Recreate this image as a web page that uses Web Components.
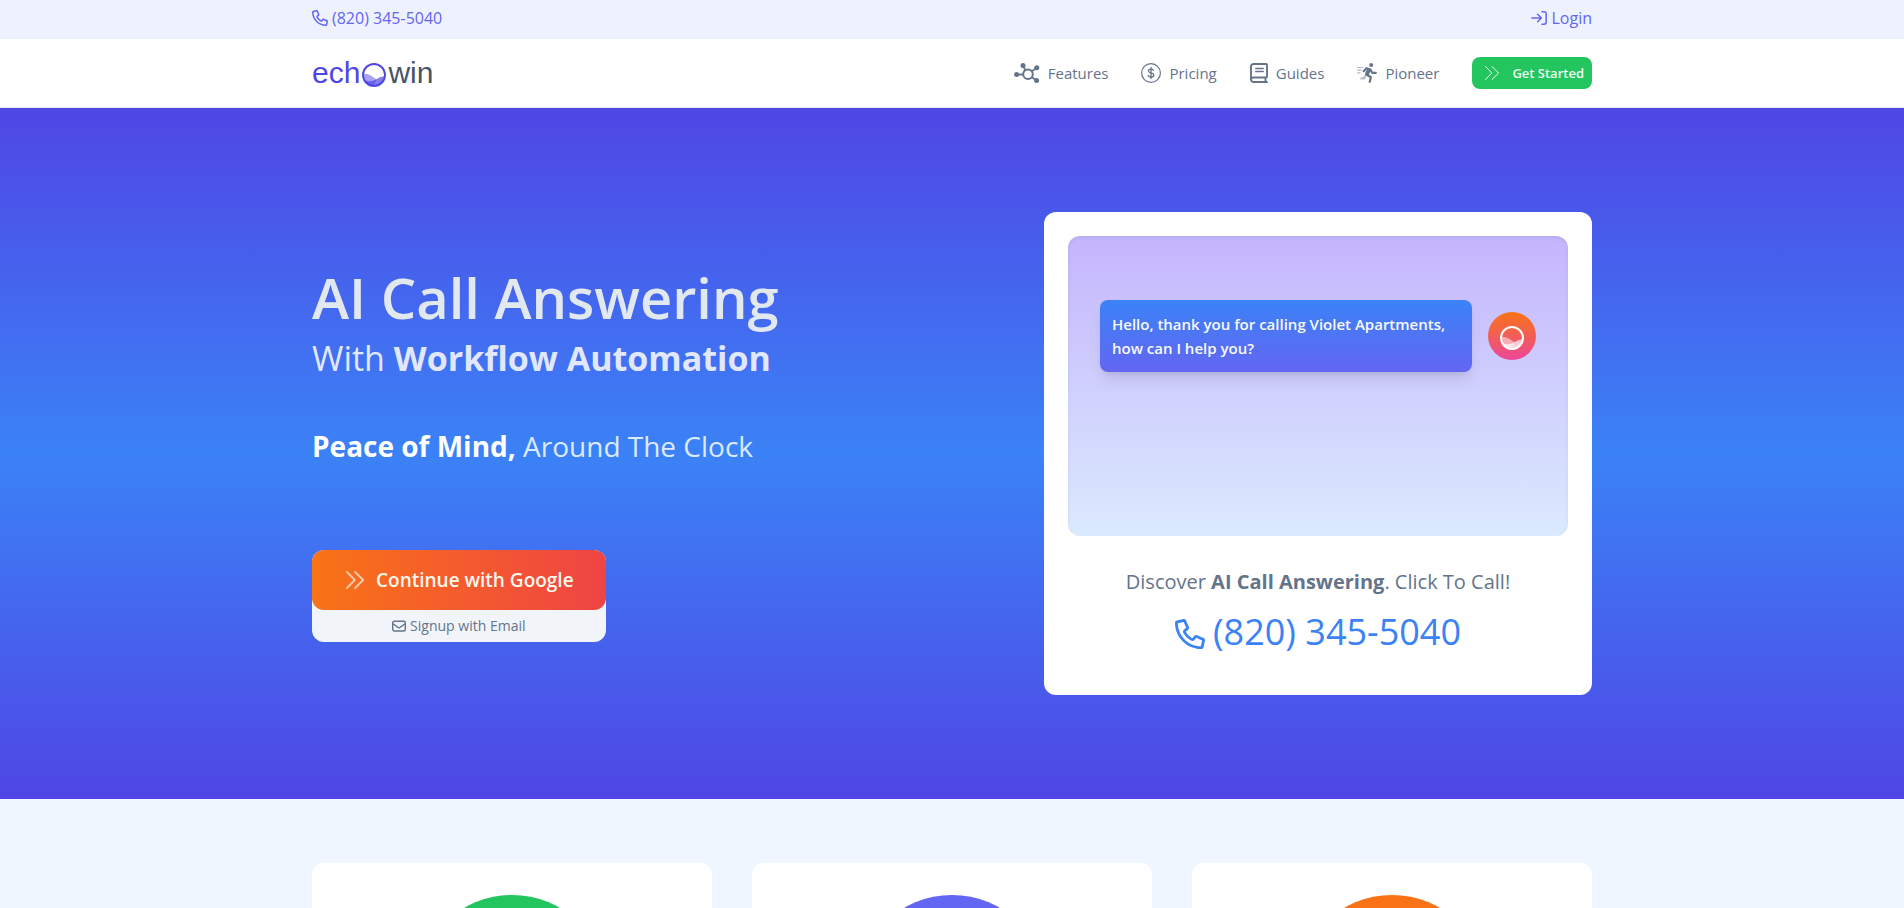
<!DOCTYPE html>
<html lang="en">
<head>
<meta charset="utf-8">
<title>echowin</title>
<style>
  body {
    margin: 0;
    background: #eff6ff;
    color: #64748b;
    font: 16px/24px "Open Sans", "Noto Sans", sans-serif;
  }
</style>
</head>
<body>
<top-bar></top-bar>
<nav-bar>
  <nav-link icon="hub">Features</nav-link>
  <nav-link icon="dollar">Pricing</nav-link>
  <nav-link icon="book">Guides</nav-link>
  <nav-link icon="runner">Pioneer</nav-link>
</nav-bar>
<hero-section>
  <call-card slot="card" phone="(820) 345-5040">Hello, thank you for calling Violet Apartments, how can I help you?</call-card>
</hero-section>
<feature-row>
  <feature-card color="#22c55e"></feature-card>
  <feature-card color="#6366f1"></feature-card>
  <feature-card color="#f97316"></feature-card>
</feature-row>

<script>
const icons = {
  phone: `<svg viewBox="0 0 512 512" fill="currentColor"><path d="M375.8 275.2c-16.4-7-35.4-2.4-46.7 11.4l-33.2 40.6c-46-26.7-84.4-65.1-111.1-111.1L225.3 183c13.8-11.3 18.5-30.3 11.4-46.7l-48-112C181.2 6.7 162.3-3.1 143.6.9l-112 24C13.2 28.8 0 45.1 0 64C0 300.7 183.5 494.5 416 510.9c4.5.3 9.1.6 13.7.8c6.2.2 12.2.3 18.4.3c18.9 0 35.2-13.2 39.1-31.6l24-112c4-18.7-5.8-37.6-23.4-45.1l-112-48zM441.5 464C225.8 460.5 51.5 286.2 48.1 70.5l99.2-21.3 43 100.4L154.4 179c-18.2 14.9-22.9 40.8-11.1 61.2c30.9 53.3 75.3 97.7 128.6 128.6c20.4 11.8 46.3 7.1 61.2-11.1l29.4-35.9 100.4 43L441.5 464z"/></svg>`,
  login: `<svg viewBox="0 0 16 16" fill="none" stroke="currentColor" stroke-width="1.5" stroke-linecap="round" stroke-linejoin="round"><path d="M.8 8h9.4M6.6 4.2 10.4 8l-3.8 3.8M11 1.8h2a2.2 2.2 0 0 1 2.2 2.2v8a2.2 2.2 0 0 1-2.2 2.2h-2"/></svg>`,
  hub: `<svg viewBox="0 0 26 20" fill="currentColor" stroke="currentColor"><path fill="none" stroke-width="1.8" d="M3 11.5h6M9.2 3l2.4 4.5M22.5 5 17.5 8.5M17.5 14l5 3.5"/><circle cx="14" cy="11.2" r="4.8" fill="none" stroke-width="2"/><g stroke="none"><circle cx="2.6" cy="11.6" r="2.5"/><circle cx="9" cy="2.6" r="2.5"/><circle cx="22.8" cy="4.8" r="2.5"/><circle cx="22.6" cy="17.4" r="2.5"/></g></svg>`,
  dollar: `<svg viewBox="0 0 20 20" fill="none" stroke="currentColor" stroke-linecap="round"><circle cx="10" cy="10" r="9.4" stroke-width="1.2"/><path stroke-width="1.3" d="M10 4.5v11M12.6 7.3C12 6.5 11 6.1 10 6.1c-1.5 0-2.6.7-2.6 1.9 0 2.7 5.4 1.3 5.4 4 0 1.2-1.2 2-2.8 2-1.2 0-2.3-.5-2.9-1.4"/></svg>`,
  book: `<svg viewBox="0 0 18 20" fill="none" stroke="currentColor" stroke-width="1.9" stroke-linecap="round" stroke-linejoin="round"><path d="M17 19H3.6A2.6 2.6 0 0 1 1 16.4V3.5A2.5 2.5 0 0 1 3.5 1H16a1 1 0 0 1 1 1v11.5a1 1 0 0 1-1 1H3.5A2.3 2.3 0 0 0 1 16.7M15.5 14.8V19"/><path stroke-width="1.5" d="M5.8 5.5h7.4M5.8 8.5h7.4"/></svg>`,
  runner: `<svg viewBox="0 0 20 20" fill="none" stroke="currentColor" stroke-linecap="round" stroke-linejoin="round"><path stroke-width="1.2" opacity=".5" d="M.6 4.5h5M.6 7.2h3.5M.6 9.9h2.4"/><path opacity=".45" stroke-width="2.4" d="M8.2 13.2 7 15.4H4.4"/><circle cx="14.2" cy="2" r="2" fill="currentColor" stroke="none"/><path stroke-width="4" d="M11.8 7.2 10 11"/><path stroke-width="2.2" d="M12.5 6.3 9.5 5.2 6.7 8.2M13.4 6.6l1.8 3.2h3.6M10.3 12l3.6 2.2-1.2 4.6"/></svg>`,
  chevrons: `<svg viewBox="0 0 16 16" fill="none" stroke="currentColor" stroke-linecap="round" stroke-linejoin="round"><path d="M1.5 1.5 7.8 8l-6.3 6.5M8 1.5 14.5 8 8 14.5"/></svg>`,
  mail: `<svg viewBox="0 0 14 12" fill="none" stroke="currentColor" stroke-width="1.4" stroke-linejoin="round"><rect x=".7" y="1.2" width="12.6" height="9.8" rx="1.5"/><path d="m1 3.8 4.7 3.5a2.2 2.2 0 0 0 2.6 0L13 3.8"/></svg>`,
  orb: `<svg viewBox="0 0 24 24"><path fill="currentColor" opacity=".5" d="M1.5 11.5C6 10 9 13 14.5 16.2L12 23A11 11 0 0 1 1.5 11.5z"/><path fill="currentColor" opacity=".7" d="M2.5 17.5c5 1.2 8.5.8 12-1.3 2.8-1.8 5-3.2 8-2.7A11 11 0 0 1 2.5 17.5z"/><circle cx="12" cy="12" r="11" fill="none" stroke="currentColor" stroke-width="1.9"/></svg>`
}

const base = /* html */`
  <style>
    * {
      box-sizing: border-box;
    }

    h1, h2, p {
      margin: 0;
      font-weight: 400;
    }

    a {
      color: inherit;
      text-decoration: none;
    }

    button {
      border: none;
      padding: 0;
      font: inherit;
      cursor: pointer;
    }

    svg {
      display: block;
      flex: none;
    }

    .container {
      max-width: 1280px;
      margin: 0 auto;
    }
  </style>`

class TopBar extends HTMLElement {
  constructor () {
    super()
    this.shadow = this.attachShadow({ mode: 'open' })
  }

  connectedCallback () {
    this.shadow.innerHTML = base + /* html */`
    <style>
      :host {
        display: block;
        background: #eef2ff;
        color: #6366f1;
      }

      .container {
        display: flex;
        justify-content: space-between;
        padding: 6px 0 9px;
      }

      a {
        display: flex;
        align-items: center;
        gap: 4px;
      }

      svg {
        width: 16px;
        height: 16px;
      }
    </style>

    <div class="container">
      <a href="tel:8203455040">${icons.phone}(820) 345-5040</a>
      <a href="#login">${icons.login}Login</a>
    </div>
    `
  }
}

class NavBar extends HTMLElement {
  constructor () {
    super()
    this.shadow = this.attachShadow({ mode: 'open' })
  }

  connectedCallback () {
    this.shadow.innerHTML = base + /* html */`
    <style>
      :host {
        display: block;
        background: #fff;
        border-bottom: 1px solid #e2e8f0;
      }

      .container {
        display: flex;
        align-items: center;
        justify-content: space-between;
        padding: 18px 0;
      }

      .logo {
        display: flex;
        align-items: center;
        color: #4f46e5;
        font: 30px/32px "Liberation Sans", Arial, sans-serif;
      }

      .logo svg {
        width: 24px;
        height: 24px;
        margin: 4px 2px 0;
      }

      .logo span {
        color: #475569;
      }

      nav {
        display: flex;
        align-items: center;
        gap: 33px;
      }

      button {
        display: flex;
        align-items: center;
        gap: 12px;
        height: 32px;
        padding: 0 8px 0 12px;
        border-radius: 8px;
        background: #22c55e;
        color: #f0fdf4;
        font-size: 13px;
        font-weight: 600;
      }

      button svg {
        width: 16px;
        height: 16px;
      }
    </style>

    <div class="container">
      <a class="logo" href="#home">ech${icons.orb}<span>win</span></a>
      <nav>
        <slot></slot>
        <button>${icons.chevrons}Get Started</button>
      </nav>
    </div>
    `
  }
}

class NavLink extends HTMLElement {
  constructor () {
    super()
    this.shadow = this.attachShadow({ mode: 'open' })
  }

  connectedCallback () {
    this.shadow.innerHTML = base + /* html */`
    <style>
      :host {
        display: block;
      }

      a {
        display: flex;
        align-items: center;
        gap: 8px;
        font-size: 15px;
      }

      svg {
        height: 20px;
      }
    </style>

    <a href="#">${icons[this.getAttribute('icon')]}<slot></slot></a>
    `
  }
}

class HeroSection extends HTMLElement {
  constructor () {
    super()
    this.shadow = this.attachShadow({ mode: 'open' })
  }

  connectedCallback () {
    this.shadow.innerHTML = base + /* html */`
    <style>
      :host {
        display: block;
        background: linear-gradient(#4f46e5, #3b82f6, #4f46e5);
      }

      .container {
        display: flex;
        align-items: center;
        justify-content: space-between;
        padding: 104px 0;
      }

      h1 {
        color: #e2e8f0;
        font-size: 56px;
        line-height: 62px;
        font-weight: 600;
      }

      h2 {
        color: #e0e7ff;
        font-size: 34px;
        line-height: 60px;
      }

      p {
        padding-top: 32px;
        color: #dbeafe;
        font-size: 28px;
        line-height: 52px;
      }

      p b {
        color: #fff;
      }

      .signup {
        display: inline-flex;
        flex-direction: column;
        margin-top: 78px;
        border-radius: 12px;
        background: #f1f5f9;
      }

      .signup button {
        display: flex;
        align-items: center;
        gap: 10px;
        height: 60px;
        padding: 0 32px;
        border-radius: 12px;
        background: linear-gradient(to right, #f97316, #ef4444);
        color: #fff7ed;
        font-size: 19px;
        font-weight: 600;
      }

      .signup button svg {
        width: 22px;
        height: 20px;
        stroke-width: 1.5;
        opacity: .7;
      }

      .signup a {
        display: flex;
        align-items: center;
        justify-content: center;
        gap: 4px;
        height: 32px;
        color: #64748b;
        font-size: 14px;
      }

      .signup a svg {
        width: 14px;
        height: 12px;
      }
    </style>

    <div class="container">
      <div>
        <h1>AI Call Answering</h1>
        <h2>With <b>Workflow Automation</b></h2>
        <p><b>Peace of Mind,</b> Around The Clock</p>
        <div class="signup">
          <button>${icons.chevrons}Continue with Google</button>
          <a href="#signup">${icons.mail}Signup with Email</a>
        </div>
      </div>
      <slot name="card"></slot>
    </div>
    `
  }
}

class CallCard extends HTMLElement {
  constructor () {
    super()
    this.shadow = this.attachShadow({ mode: 'open' })
  }

  connectedCallback () {
    this.shadow.innerHTML = base + /* html */`
    <style>
      :host {
        display: block;
        box-sizing: border-box;
        width: 548px;
        padding: 24px 24px 36px;
        border-radius: 12px;
        background: #fff;
        text-align: center;
      }

      .chat {
        height: 300px;
        padding: 64px 32px;
        border-radius: 12px;
        background: linear-gradient(#c4b5fd, #dbeafe);
        box-shadow: inset 0 2px 4px rgba(0, 0, 0, .06);
      }

      .message {
        display: flex;
        align-items: center;
        gap: 16px;
      }

      .bubble {
        flex: 1;
        padding: 12px;
        border-radius: 8px;
        background: linear-gradient(#3b82f6, #6366f1);
        box-shadow: 0 10px 15px -3px rgba(0, 0, 0, .1), 0 4px 6px -4px rgba(0, 0, 0, .1);
        color: #f8fafc;
        font-size: 15px;
        font-weight: 600;
        text-align: left;
      }

      .avatar {
        display: grid;
        place-items: center;
        width: 48px;
        height: 48px;
        padding-top: 4px;
        border-radius: 50%;
        background: linear-gradient(#f97316, #ec4899);
        color: #fff;
      }

      .avatar svg {
        width: 24px;
        height: 24px;
      }

      p {
        margin-top: 32px;
        font-size: 20px;
        line-height: 28px;
      }

      .call {
        display: flex;
        align-items: center;
        justify-content: center;
        gap: 8px;
        margin-top: 8px;
        color: #3b82f6;
        font-size: 36px;
        line-height: 55px;
      }

      .call svg {
        width: 30px;
        height: 30px;
        margin-top: 4px;
      }
    </style>

    <div class="chat">
      <div class="message">
        <div class="bubble"><slot></slot></div>
        <div class="avatar">${icons.orb}</div>
      </div>
    </div>
    <p>Discover <b>AI Call Answering</b>. Click To Call!</p>
    <a class="call" href="tel:8203455040">${icons.phone}${this.getAttribute('phone')}</a>
    `
  }
}

class FeatureRow extends HTMLElement {
  constructor () {
    super()
    this.shadow = this.attachShadow({ mode: 'open' })
  }

  connectedCallback () {
    this.shadow.innerHTML = base + /* html */`
    <style>
      :host {
        display: block;
        padding: 64px 0;
      }

      .container {
        display: grid;
        grid-template-columns: repeat(3, 1fr);
        gap: 40px;
      }
    </style>

    <div class="container"><slot></slot></div>
    `
  }
}

class FeatureCard extends HTMLElement {
  constructor () {
    super()
    this.shadow = this.attachShadow({ mode: 'open' })
  }

  connectedCallback () {
    this.shadow.innerHTML = base + /* html */`
    <style>
      :host {
        display: block;
        padding: 32px;
        border-radius: 12px;
        background: #fff;
      }

      .circle {
        width: 192px;
        height: 192px;
        margin: 0 auto;
        border-radius: 50%;
        background: ${this.getAttribute('color')};
      }
    </style>

    <div class="circle"></div>
    `
  }
}

customElements.define('top-bar', TopBar)
customElements.define('nav-bar', NavBar)
customElements.define('nav-link', NavLink)
customElements.define('hero-section', HeroSection)
customElements.define('call-card', CallCard)
customElements.define('feature-row', FeatureRow)
customElements.define('feature-card', FeatureCard)
</script>
</body>
</html>
